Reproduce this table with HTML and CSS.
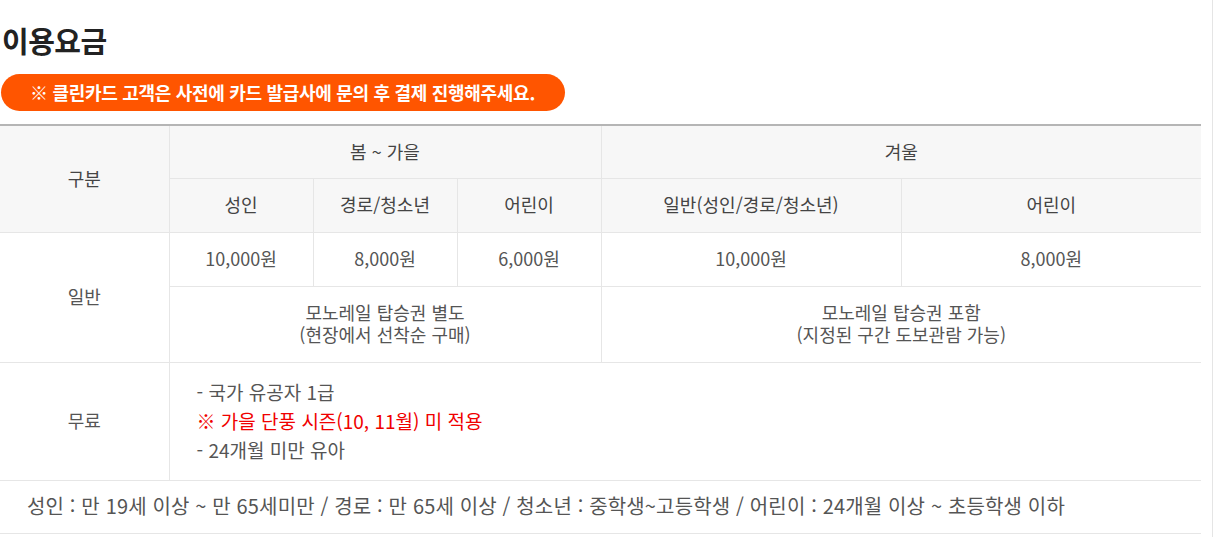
FILE: index.html
```html
<!DOCTYPE html>
<html lang="ko">
<head>
    <meta charset="utf-8">
    <title>이용요금</title>
    <link rel="stylesheet" href="styles.css">
</head>
<body>
    <div class="wrap">
        <h2 class="title">이용요금</h2>
        <p class="notice">※ 클린카드 고객은 사전에 카드 발급사에 문의 후 결제 진행해주세요.</p>
        <table class="price-table">
            <colgroup>
                <col class="c-type">
                <col class="c-small">
                <col class="c-small">
                <col class="c-small">
                <col class="c-wide">
                <col class="c-wide">
            </colgroup>
            <tr class="head head-1">
                <th rowspan="2">구분</th>
                <th colspan="3">봄 ~ 가을</th>
                <th colspan="2">겨울</th>
            </tr>
            <tr class="head head-2">
                <th>성인</th>
                <th>경로/청소년</th>
                <th>어린이</th>
                <th>일반(성인/경로/청소년)</th>
                <th>어린이</th>
            </tr>
            <tr class="row-price">
                <td rowspan="2">일반</td>
                <td>10,000원</td>
                <td>8,000원</td>
                <td>6,000원</td>
                <td>10,000원</td>
                <td>8,000원</td>
            </tr>
            <tr class="row-mono">
                <td colspan="3">모노레일 탑승권 별도<br>(현장에서 선착순 구매)</td>
                <td colspan="2">모노레일 탑승권 포함<br>(지정된 구간 도보관람 가능)</td>
            </tr>
            <tr class="row-free">
                <td>무료</td>
                <td colspan="5" class="free-list">
                    <p>- 국가 유공자 1급</p>
                    <p class="red">※ 가을 단풍 시즌(10, 11월) 미 적용</p>
                    <p>- 24개월 미만 유아</p>
                </td>
            </tr>
            <tr class="row-note">
                <td colspan="6">성인 : 만 19세 이상 ~ 만 65세미만 / 경로 : 만 65세 이상 / 청소년 : 중학생~고등학생 / 어린이 : 24개월 이상 ~ 초등학생 이하</td>
            </tr>
        </table>
    </div>
</body>
</html>
```

FILE: styles.css
```css
body {
    margin: 0;
    padding: 0;
    background: #ffffff;
    color: #555;
    font-family: "Noto Sans CJK KR", "Noto Sans", sans-serif;
}

.wrap {
    width: 1213px;
    min-height: 537px;
    border-right: 1px solid #e5e5e5;
    box-sizing: border-box;
    padding: 22px 0 0 0;
}

.title {
    margin: 0 0 16px 2px;
    font-size: 29px;
    font-weight: bold;
    line-height: 36px;
    color: #222;
    letter-spacing: -0.5px;
}

.notice {
    display: block;
    width: fit-content;
    margin: 0 0 13px 1px;
    padding: 0 30px 0 29px;
    height: 37px;
    line-height: 36px;
    border-radius: 19px;
    background: #ff5500;
    color: #fff;
    font-size: 18px;
    font-weight: bold;
    letter-spacing: -0.3px;
}

.price-table {
    width: 1201px;
    border-collapse: collapse;
    table-layout: fixed;
    border-top: 2px solid #b5b5b5;
    font-size: 18px;
}

.c-type { width: 169px; }
.c-small { width: 144px; }
.c-wide { width: 300px; }

th,
td {
    border: 1px solid #e6e6e6;
    padding: 0 0 3px 0;
    text-align: center;
    font-weight: normal;
    color: #555;
}

tr > :first-child {
    border-left: none;
}

tr > :last-child {
    border-right: none;
}

th {
    background: #f7f7f7;
    color: #444;
}

.head-1 th { height: 49px; }
.head-2 th { height: 50px; }

.row-price td { height: 50px; }
.row-mono td {
    height: 72px;
    line-height: 22px;
}

.row-free td { height: 114px; }

.free-list {
    text-align: left !important;
    padding: 0 0 3px 27px;
    font-size: 19px;
}

.free-list p {
    margin: 0;
    line-height: 29px;
}

.free-list .red {
    color: #f00000;
}

.row-note td {
    height: 49px;
    text-align: left;
    padding-left: 27px;
    border-left: none;
    border-right: none;
    font-size: 20px;
    letter-spacing: 0.15px;
}
```
